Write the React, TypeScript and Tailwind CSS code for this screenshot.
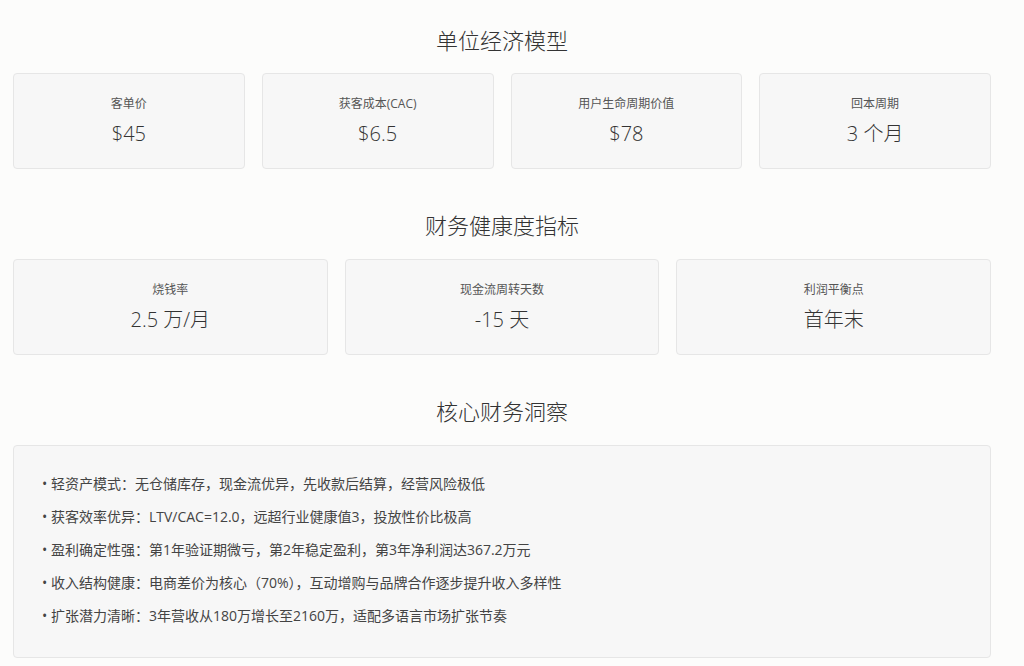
const unit = [
  ["客单价", "$45"],
  ["获客成本(CAC)", "$6.5"],
  ["用户生命周期价值", "$78"],
  ["回本周期", "3 个月"],
];
const health = [
  ["烧钱率", "2.5 万/月"],
  ["现金流周转天数", "-15 天"],
  ["利润平衡点", "首年末"],
];
const insights = [
  "轻资产模式：无仓储库存，现金流优异，先收款后结算，经营风险极低",
  "获客效率优异：LTV/CAC=12.0，远超行业健康值3，投放性价比极高",
  "盈利确定性强：第1年验证期微亏，第2年稳定盈利，第3年净利润达367.2万元",
  "收入结构健康：电商差价为核心（70%），互动增购与品牌合作逐步提升收入多样性",
  "扩张潜力清晰：3年营收从180万增长至2160万，适配多语言市场扩张节奏",
];

function Card({ label, value }: { label: string; value: string }) {
  return (
    <div className="h-[96px] rounded border border-[#e6e6e6] bg-[#f7f7f7] flex flex-col items-center pt-[21px]">
      <div className="text-[12px] leading-[18px] text-[#555]">{label}</div>
      <div className="mt-[8px] text-[20px] leading-[26px] font-light text-[#333]">{value}</div>
    </div>
  );
}

function Title({ children }: { children: string }) {
  return <h2 className="text-center text-[22px] leading-[30px] font-light text-[#333]">{children}</h2>;
}

export default function App() {
  return (
    <div
      className="min-h-screen bg-[#fcfcfb] pl-[13px] pr-[33px] pt-[25px]"
      style={{ fontFamily: '"Open Sans", "Noto Sans CJK SC", sans-serif' }}
    >
      <Title>单位经济模型</Title>
      <div className="mt-[18px] grid grid-cols-4 gap-[17px]">
        {unit.map(([l, v]) => (
          <Card key={l} label={l} value={v} />
        ))}
      </div>
      <div className="mt-[41px]">
        <Title>财务健康度指标</Title>
      </div>
      <div className="mt-[19px] grid grid-cols-3 gap-[17px]">
        {health.map(([l, v]) => (
          <Card key={l} label={l} value={v} />
        ))}
      </div>
      <div className="mt-[41px]">
        <Title>核心财务洞察</Title>
      </div>
      <div className="mt-[19px] h-[213px] rounded border border-[#e6e6e6] bg-[#f7f7f7] pl-[28px] pt-[27px]">
        <ul className="flex flex-col gap-[11px]">
          {insights.map((t) => (
            <li key={t} className="text-[14px] leading-[22px] text-[#444]">
              • {t}
            </li>
          ))}
        </ul>
      </div>
    </div>
  );
}
